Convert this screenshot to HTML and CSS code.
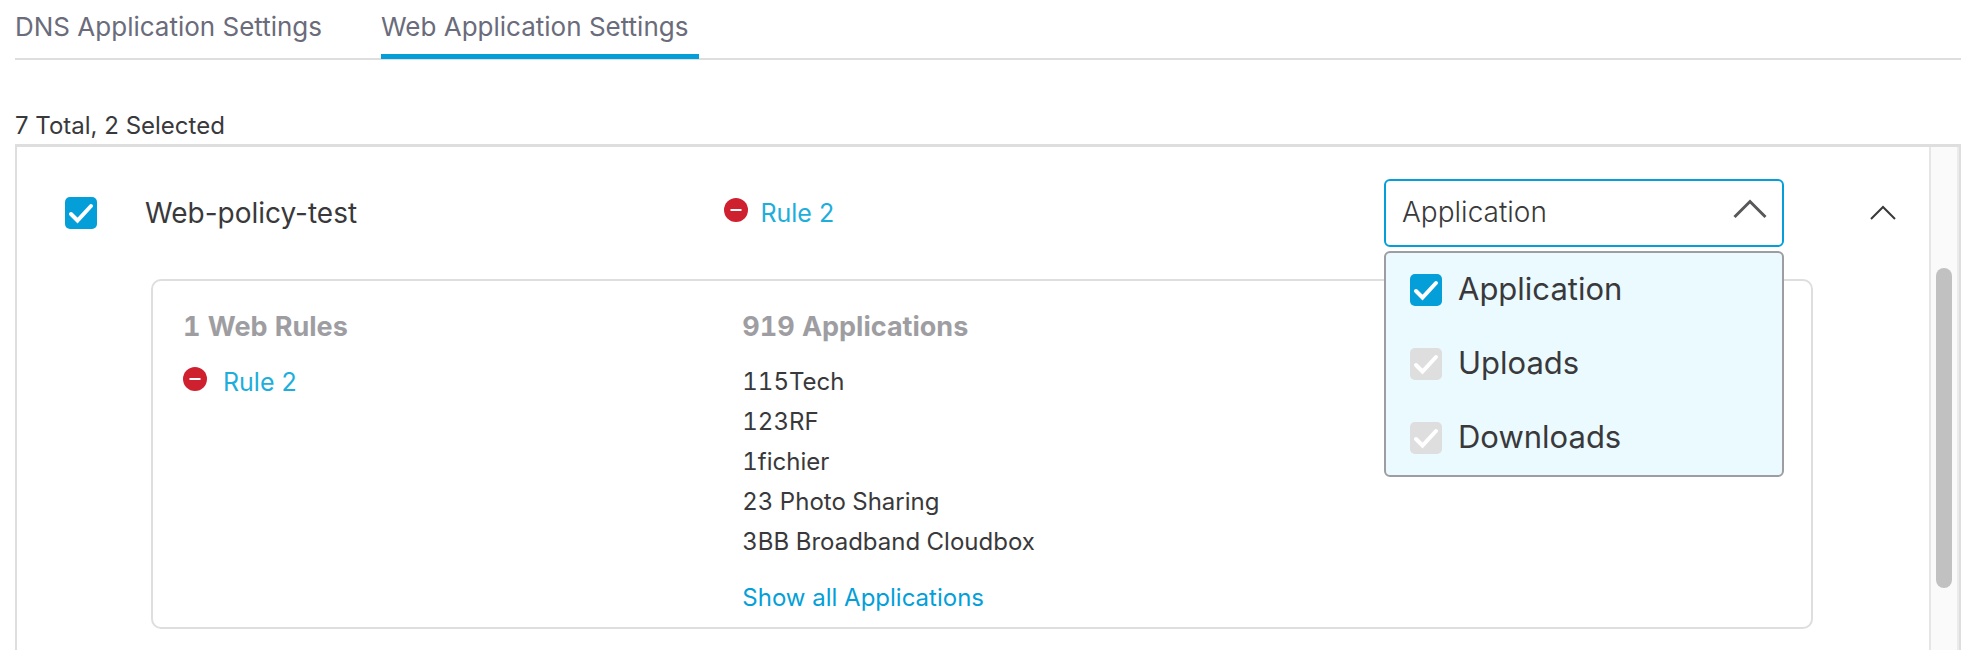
FILE: index.html
```html
<!DOCTYPE html>
<html lang="en">
<head>
<meta charset="utf-8">
<title>Web Application Settings</title>
<link rel="stylesheet" href="styles.css">
</head>
<body>
<nav class="tabs">
  <a class="tab" href="#dns">DNS Application Settings</a>
  <a class="tab tab-active" href="#web" aria-current="page">Web Application Settings</a>
</nav>
<main class="main">
  <p class="summary">7 Total, 2 Selected</p>
  <section class="panel">
    <div class="content">
      <div class="row">
        <label class="policy">
          <input class="check" type="checkbox" checked>
          <span>Web-policy-test</span>
        </label>
        <div class="rule">
          <svg class="block-icon" viewBox="0 0 24 24" aria-hidden="true"><circle cx="12" cy="12" r="12"/><path d="M6.5 12h11"/></svg>
          <a href="#rule2">Rule 2</a>
        </div>
        <div class="dropdown">
          <select class="select" aria-label="Scope">
            <option>Application</option>
          </select>
          <svg class="select-arrow" viewBox="0 0 34 20" aria-hidden="true"><path d="M1.5 18 17 2.5 32.5 18"/></svg>
          <div class="menu">
            <label class="option"><input class="check" type="checkbox" checked><span>Application</span></label>
            <label class="option"><input class="check" type="checkbox" checked disabled><span>Uploads</span></label>
            <label class="option"><input class="check" type="checkbox" checked disabled><span>Downloads</span></label>
          </div>
        </div>
        <button class="collapse" type="button" aria-label="Collapse">
          <svg viewBox="0 0 26 16" aria-hidden="true"><path d="M1 14 13 2 25 14"/></svg>
        </button>
      </div>
      <div class="card">
        <div>
          <h2 class="heading">1 Web Rules</h2>
          <div class="rule rule-detail">
            <svg class="block-icon" viewBox="0 0 24 24" aria-hidden="true"><circle cx="12" cy="12" r="12"/><path d="M6.5 12h11"/></svg>
            <a href="#rule2">Rule 2</a>
          </div>
        </div>
        <div>
          <h2 class="heading">919 Applications</h2>
          <ul class="apps">
            <li>115Tech</li>
            <li>123RF</li>
            <li>1fichier</li>
            <li>23 Photo Sharing</li>
            <li>3BB Broadband Cloudbox</li>
          </ul>
          <a class="show-all" href="#all">Show all Applications</a>
        </div>
      </div>
    </div>
    <div class="track"><div class="thumb"></div></div>
  </section>
</main>
</body>
</html>
```
FILE: styles.css
```css
* {
  box-sizing: border-box;
}

body {
  display: flex;
  flex-direction: column;
  min-height: 100vh;
  margin: 0;
  padding: 0 17px 0 15px;
  background: #fff;
  color: #39393b;
  font-family: Inter, "Liberation Sans", sans-serif;
  font-size: 24px;
  line-height: 40px;
}

a {
  text-decoration: none;
}

.tabs {
  display: flex;
  gap: 48px;
  height: 60px;
  border-bottom: 2px solid #dedede;
}

.tab {
  height: 59px;
  padding: 7px 11px 0 0;
  color: #6a6b7b;
  font-size: 26px;
}

.tab-active {
  border-bottom: 5px solid #049fd9;
}

.main {
  display: flex;
  flex: 1;
  flex-direction: column;
}

.summary {
  margin: 48px 0 0;
  line-height: 36px;
}

.panel {
  display: flex;
  flex: 1;
  border: 2px solid #dedede;
  border-top-width: 3px;
  border-bottom: 0;
}

.content {
  flex: 1;
}

.row {
  display: grid;
  grid-template-columns: 37% 1fr 400px 145px;
  align-items: center;
  padding-top: 32px;
}

.policy {
  display: flex;
  align-items: center;
  gap: 48px;
  padding-left: 48px;
  font-size: 28px;
}

.check {
  flex: none;
  width: 32px;
  height: 32px;
  margin: 0;
  appearance: none;
  border-radius: 5px;
  background: #049fd9 url("data:image/svg+xml,%3Csvg xmlns='http://www.w3.org/2000/svg' viewBox='0 0 32 32'%3E%3Cpath d='M6 17l6.5 6.5L26 9' fill='none' stroke='white' stroke-width='4' stroke-linecap='round'/%3E%3C/svg%3E") center / contain no-repeat;
}

.check:disabled {
  background-color: #dedede;
}

.rule {
  display: flex;
  align-items: center;
  gap: 12px;
  font-size: 25px;
}

.rule a {
  color: #1eaedb;
}

.block-icon {
  width: 24px;
  height: 24px;
  margin-bottom: 6px;
  fill: #cf2030;
  stroke: #fff;
  stroke-width: 2;
}

.block-icon circle {
  stroke: none;
}

.dropdown {
  position: relative;
}

.select {
  display: block;
  width: 100%;
  height: 68px;
  padding: 0 16px 2px;
  appearance: none;
  border: 2px solid #049fd9;
  border-radius: 6px;
  background: #fff;
  color: #39393b;
  font: 300 28px Inter, "Liberation Sans", sans-serif;
}

.select-arrow {
  position: absolute;
  top: 20px;
  right: 17px;
  width: 34px;
  height: 20px;
  fill: none;
  stroke: #58585b;
  stroke-width: 3;
  pointer-events: none;
}

.menu {
  position: absolute;
  z-index: 1;
  top: 72px;
  left: 0;
  width: 100%;
  border: 2px solid #9e9ea2;
  border-radius: 6px;
  background: #ebfaff;
}

.option {
  display: flex;
  align-items: center;
  gap: 16px;
  height: 74px;
  padding-left: 24px;
  font-size: 31px;
}

.option span {
  padding-bottom: 2px;
}

.collapse {
  justify-self: end;
  height: 40px;
  margin-right: 32px;
  padding: 0;
  border: 0;
  background: none;
}

.collapse svg {
  display: block;
  width: 28px;
  height: 16px;
  fill: none;
  stroke: #39393b;
  stroke-width: 2;
}

.card {
  display: grid;
  grid-template-columns: 35fr 65fr;
  margin: 32px 116px 20px 134px;
  padding: 26px 30px 9px;
  border: 2px solid #dedede;
  border-radius: 10px;
}

.heading {
  margin: 0 0 15px;
  color: #9e9ea2;
  font-size: 27px;
  font-variant-numeric: tabular-nums;
  line-height: 40px;
}

.rule-detail {
  gap: 16px;
}

.apps {
  margin: 0 0 16px;
  padding: 0;
  font-variant-numeric: tabular-nums;
  list-style: none;
}

.show-all {
  display: block;
  color: #049fd9;
}

.track {
  display: flex;
  justify-content: center;
  width: 30px;
  border-right: 2px solid #ebebeb;
  border-left: 2px solid #e6e6e6;
  background: #fafafa;
}

.thumb {
  width: 16px;
  height: 320px;
  margin-top: 121px;
  border-radius: 8px;
  background: #c1c1c1;
}
```
